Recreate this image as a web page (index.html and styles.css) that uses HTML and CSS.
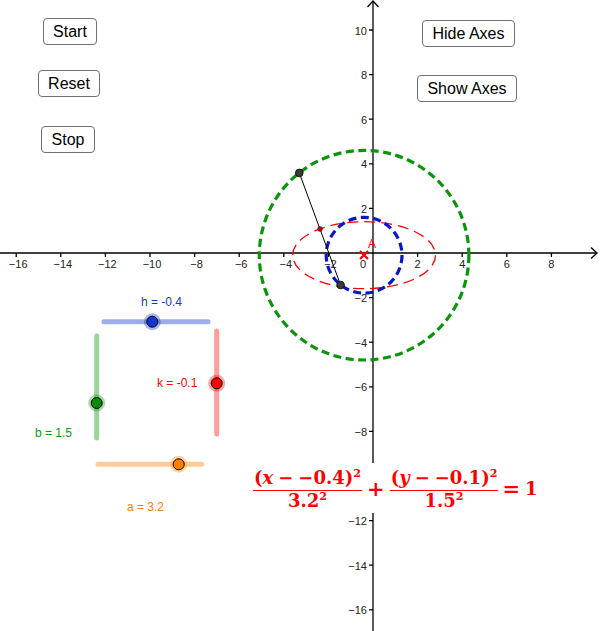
FILE: index.html
```html
<!DOCTYPE html>
<html>
<head>
<meta charset="utf-8">
<link rel="stylesheet" href="styles.css">
</head>
<body>
<div class="applet">
  <svg class="graphics" width="600" height="631" viewBox="0 0 600 631" xmlns="http://www.w3.org/2000/svg">
    <!-- axes -->
    <g class="axes" stroke="#000" stroke-width="1.3" fill="none">
      <line x1="0" y1="253" x2="597" y2="253"/>
      <polyline points="591,247.5 597,253 591,258.5"/>
      <line x1="373" y1="1" x2="373" y2="631"/>
      <polyline points="367.5,7 373,1 378.5,7"/>
      <!-- x ticks -->
      <path d="M16.2 253v4 M60.8 253v4 M105.4 253v4 M150 253v4 M194.6 253v4 M239.2 253v4 M283.8 253v4 M328.4 253v4 M417.6 253v4 M462.2 253v4 M506.8 253v4 M551.4 253v4"/>
      <!-- y ticks -->
      <path d="M373 30h-4 M373 74.6h-4 M373 119.2h-4 M373 163.8h-4 M373 208.4h-4 M373 297.6h-4 M373 342.2h-4 M373 386.8h-4 M373 431.4h-4 M373 520.6h-4 M373 565.2h-4 M373 609.8h-4"/>
    </g>
    <g class="axis-labels">
      <text x="18.2" y="268" text-anchor="middle">−16</text>
      <text x="62.8" y="268" text-anchor="middle">−14</text>
      <text x="107.4" y="268" text-anchor="middle">−12</text>
      <text x="152" y="268" text-anchor="middle">−10</text>
      <text x="196.6" y="268" text-anchor="middle">−8</text>
      <text x="241.2" y="268" text-anchor="middle">−6</text>
      <text x="285.8" y="268" text-anchor="middle">−4</text>
      <text x="330.4" y="268" text-anchor="middle">−2</text>
      <text x="363" y="268" text-anchor="middle">0</text>
      <text x="417.6" y="268" text-anchor="middle">2</text>
      <text x="462.2" y="268" text-anchor="middle">4</text>
      <text x="506.8" y="268" text-anchor="middle">6</text>
      <text x="551.4" y="268" text-anchor="middle">8</text>

      <text x="367" y="34.5" text-anchor="end">10</text>
      <text x="367" y="79" text-anchor="end">8</text>
      <text x="367" y="123.5" text-anchor="end">6</text>
      <text x="367" y="168" text-anchor="end">4</text>
      <text x="367" y="212.5" text-anchor="end">2</text>
      <text x="367" y="302" text-anchor="end">−2</text>
      <text x="367" y="346.5" text-anchor="end">−4</text>
      <text x="367" y="391" text-anchor="end">−6</text>
      <text x="367" y="435.5" text-anchor="end">−8</text>
      <text x="367" y="525" text-anchor="end">−12</text>
      <text x="367" y="569.5" text-anchor="end">−14</text>
      <text x="367" y="614" text-anchor="end">−16</text>
    </g>

    <!-- conics -->
    <circle cx="364.1" cy="255.2" r="104.8" fill="none" stroke="#0a940a" stroke-width="3.2" stroke-dasharray="8 4.5"/>
    <ellipse cx="364.1" cy="255.2" rx="71.4" ry="33.5" fill="none" stroke="#ff0000" stroke-width="1.3" stroke-dasharray="11 6"/>
    <circle cx="364.1" cy="255.2" r="37.9" fill="none" stroke="#0a14c8" stroke-width="3.2" stroke-dasharray="8 4.5"/>

    <!-- point A -->
    <path d="M360 251l8 8 M368 251l-8 8" stroke="#ff0000" stroke-width="2.2" fill="none"/>
    <text class="label-a" x="368" y="248">A</text>

    <!-- segment & points -->
    <line x1="299.3" y1="172.9" x2="340.6" y2="285" stroke="#000" stroke-width="1"/>
    <circle cx="299.3" cy="172.9" r="3.8" fill="#3a3a3a" stroke="#111" stroke-width="1"/>
    <circle cx="340.6" cy="285" r="3.8" fill="#3a3a3a" stroke="#111" stroke-width="1"/>
    <circle cx="320" cy="229" r="2.3" fill="#e00000" stroke="#400" stroke-width="0.8"/>

    <!-- slider h -->
    <line x1="104" y1="321.7" x2="208" y2="321.7" stroke="#9dade9" stroke-width="5" stroke-linecap="round"/>
    <circle cx="152.3" cy="321.7" r="8.5" fill="#1133cc" fill-opacity="0.35"/>
    <circle cx="152.3" cy="321.7" r="5.5" fill="#1536d0" stroke="#000" stroke-width="1"/>
    <text class="sl sl-h" x="141" y="306">h = -0.4</text>

    <!-- slider k -->
    <line x1="216.7" y1="331" x2="216.7" y2="434" stroke="#ff9d9d" stroke-width="5" stroke-linecap="round"/>
    <circle cx="216.7" cy="383.3" r="8.5" fill="#ff0000" fill-opacity="0.35"/>
    <circle cx="216.7" cy="383.3" r="5.5" fill="#ff0000" stroke="#000" stroke-width="1"/>
    <text class="sl sl-k" x="157" y="387">k = -0.1</text>

    <!-- slider b -->
    <line x1="96.7" y1="336" x2="96.7" y2="438" stroke="#9ad49a" stroke-width="5" stroke-linecap="round"/>
    <circle cx="96.7" cy="403" r="8.5" fill="#0a940a" fill-opacity="0.35"/>
    <circle cx="96.7" cy="403" r="5.5" fill="#0a8a0a" stroke="#000" stroke-width="1"/>
    <text class="sl sl-b" x="35" y="437">b = 1.5</text>

    <!-- slider a -->
    <line x1="98" y1="464.3" x2="201.7" y2="464.3" stroke="#ffcc99" stroke-width="5" stroke-linecap="round"/>
    <circle cx="178.7" cy="464.3" r="8.5" fill="#ff8000" fill-opacity="0.35"/>
    <circle cx="178.7" cy="464.3" r="5.5" fill="#ff8000" stroke="#000" stroke-width="1"/>
    <text class="sl sl-a" x="127" y="511">a = 3.2</text>
  </svg>

  <button class="btn btn-start">Start</button>
  <button class="btn btn-reset">Reset</button>
  <button class="btn btn-stop">Stop</button>
  <button class="btn btn-hide">Hide Axes</button>
  <button class="btn btn-show">Show Axes</button>

  <div class="formula">
    <span class="frac">
      <span class="num">(<i>x</i><span class="bin">−</span>−0.4)<sup>2</sup></span>
      <span class="den">3.2<sup>2</sup></span>
    </span>
    <span class="op plus">+</span>
    <span class="frac">
      <span class="num">(<i>y</i><span class="bin">−</span>−0.1)<sup>2</sup></span>
      <span class="den">1.5<sup>2</sup></span>
    </span>
    <span class="op eq">=</span>
    <span class="one">1</span>
  </div>
</div>
</body>
</html>
```

FILE: styles.css
```css
html, body {
  margin: 0;
  padding: 0;
  background: #fff;
}

.applet {
  position: relative;
  width: 600px;
  height: 631px;
  overflow: hidden;
  background: #fff;
  font-family: "Liberation Sans", Arial, sans-serif;
}

.graphics {
  position: absolute;
  left: 0;
  top: 0;
  display: block;
}

.axis-labels text {
  font-family: "Liberation Sans", Arial, sans-serif;
  font-size: 11px;
  fill: #222;
}

.label-a {
  font-family: "Liberation Sans", Arial, sans-serif;
  font-size: 12px;
  fill: #ff0000;
}

.sl {
  font-family: "Liberation Sans", Arial, sans-serif;
  font-size: 12px;
}
.sl-h { fill: #1536d0; }
.sl-k { fill: #ff0000; }
.sl-b { fill: #0a9a0a; }
.sl-a { fill: #ff8000; }

.btn {
  position: absolute;
  box-sizing: border-box;
  height: 27px;
  margin: 0;
  padding: 0;
  border: 1.5px solid #707070;
  border-radius: 4px;
  background: #fff;
  color: #000;
  font-family: "Liberation Sans", Arial, sans-serif;
  font-size: 16px;
  line-height: 1;
  display: flex;
  align-items: center;
  justify-content: center;
}
.btn-start { left: 43px; top: 18px; width: 54px; }
.btn-reset { left: 38px; top: 70px; width: 62px; }
.btn-stop  { left: 41px; top: 126px; width: 54px; }
.btn-hide  { left: 422px; top: 20px; width: 93px; }
.btn-show  { left: 417px; top: 75px; width: 100px; }

.formula {
  position: absolute;
  left: 249px;
  top: 463px;
  padding: 4px 4px 3px;
  background: #fff;
  color: #ff0000;
  font-family: "DejaVu Serif", "Liberation Serif", serif;
  font-weight: bold;
  font-size: 18px;
  display: flex;
  align-items: center;
  white-space: nowrap;
}

.frac {
  display: inline-flex;
  flex-direction: column;
  align-items: center;
}

.num {
  border-bottom: 1.5px solid #ff0000;
  padding: 0 1px 1px;
  line-height: 22px;
}

.den {
  line-height: 18px;
  padding-top: 1px;
}

.formula i {
  font-style: italic;
}

.formula sup {
  font-size: 0.62em;
  vertical-align: 0.6em;
  line-height: 0;
}

.bin {
  margin: 0 5px;
}
.op {
  font-size: 21px;
}
.plus {
  margin: 0 5px 0 5px;
}
.eq {
  margin: 0 5px 0 4px;
}
.one {
  font-size: 18px;
}
```
